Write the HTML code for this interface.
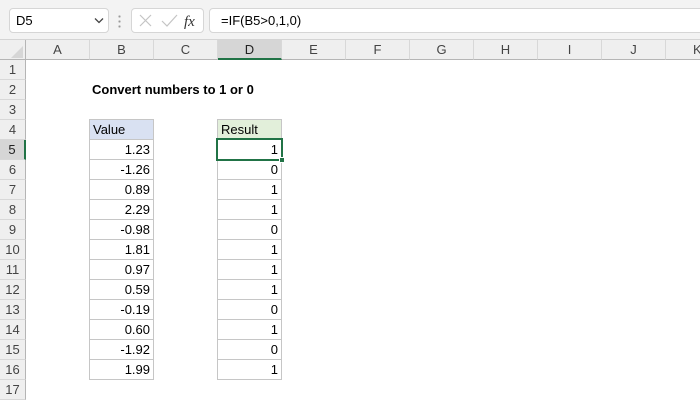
<!DOCTYPE html>
<html><head><style>
*{margin:0;padding:0;box-sizing:border-box}
body{width:700px;height:400px;overflow:hidden;background:#fff;font-family:"Liberation Sans",Arial,sans-serif;position:relative;color:#000}
.a{position:absolute}
.top{left:0;top:0;width:700px;height:40px;background:#f3f3f3;border-bottom:1px solid #d4d4d4}
.box{background:#fff;border:1px solid #d6d6d6;border-radius:4px}
.ch{top:40px;height:20px;background:#efefef;border-bottom:1px solid #b5b5b5;border-right:1px solid #d8d8d8;font-size:13px;color:#444;text-align:center;line-height:19px}
.rh{left:0;width:26px;height:20px;background:#efefef;border-right:1px solid #b5b5b5;border-bottom:1px solid #d8d8d8;font-size:13px;color:#444;text-align:center;line-height:20px}
.c{height:21px;width:65px;border:1px solid #c6c6c6;font-size:13px;line-height:19px;text-align:right;padding-right:3px}
</style></head><body>
<div class="a top"></div>
<div class="a box" style="left:9px;top:8px;width:100px;height:25px;font-size:13px;line-height:23px;padding-left:6px">D5</div>
<svg class="a" style="left:94px;top:17px" width="10" height="7"><path d="M1 1.5L5 5.5L9 1.5" stroke="#444" stroke-width="1.3" fill="none"/></svg>
<div class="a" style="left:118px;top:14px;width:3px;height:14px;background:radial-gradient(circle,#999 1px,transparent 1.2px) 0 0/3px 5px"></div>
<div class="a box" style="left:131px;top:8px;width:73px;height:25px"></div>
<svg class="a" style="left:136px;top:12px" width="70" height="18"><path d="M4 3L15 14M15 3L4 14" stroke="#c4c4c4" stroke-width="1.2"/><path d="M26 9L31 14L41 3" stroke="#c4c4c4" stroke-width="1.2" fill="none"/><text x="48" y="14" font-family="Liberation Serif" font-style="italic" font-size="15" fill="#333">fx</text></svg>
<div class="a box" style="left:209px;top:8px;width:500px;height:25px;font-size:13px;line-height:23px;padding-left:11px">=IF(B5&gt;0,1,0)</div>

<div class="a" style="left:0;top:40px;width:26px;height:20px;background:#efefef;border-right:1px solid #b5b5b5;border-bottom:1px solid #b5b5b5"></div>
<svg class="a" style="left:10px;top:45px" width="14" height="14"><path d="M13 1L13 13L1 13Z" fill="#d6d6d6"/></svg>
<div class="a ch" style="left:26px;width:64px">A</div>
<div class="a ch" style="left:90px;width:64px">B</div>
<div class="a ch" style="left:154px;width:64px">C</div>
<div class="a ch" style="left:218px;width:64px;background:#d6d6d6;border-bottom:2px solid #217346;color:#222">D</div>
<div class="a ch" style="left:282px;width:64px">E</div>
<div class="a ch" style="left:346px;width:64px">F</div>
<div class="a ch" style="left:410px;width:64px">G</div>
<div class="a ch" style="left:474px;width:64px">H</div>
<div class="a ch" style="left:538px;width:64px">I</div>
<div class="a ch" style="left:602px;width:64px">J</div>
<div class="a ch" style="left:666px;width:64px;text-align:left;padding-left:27px">K</div>

<div class="a rh" style="top:60px">1</div>
<div class="a rh" style="top:80px">2</div>
<div class="a rh" style="top:100px">3</div>
<div class="a rh" style="top:120px">4</div>
<div class="a rh" style="top:140px;background:#d6d6d6;border-right:2px solid #217346;color:#222">5</div>
<div class="a rh" style="top:160px">6</div>
<div class="a rh" style="top:180px">7</div>
<div class="a rh" style="top:200px">8</div>
<div class="a rh" style="top:220px">9</div>
<div class="a rh" style="top:240px">10</div>
<div class="a rh" style="top:260px">11</div>
<div class="a rh" style="top:280px">12</div>
<div class="a rh" style="top:300px">13</div>
<div class="a rh" style="top:320px">14</div>
<div class="a rh" style="top:340px">15</div>
<div class="a rh" style="top:360px">16</div>
<div class="a rh" style="top:380px">17</div>

<div class="a" style="left:92px;top:82px;font-size:13px;font-weight:bold">Convert numbers to 1 or 0</div>

<div class="a c" style="left:89px;top:119px;background:#d9e1f2;text-align:left;padding-left:3px">Value</div>
<div class="a c" style="left:217px;top:119px;background:#e2efda;text-align:left;padding-left:3px">Result</div>

<div class="a c" style="left:89px;top:139px">1.23</div>
<div class="a c" style="left:89px;top:159px">-1.26</div>
<div class="a c" style="left:89px;top:179px">0.89</div>
<div class="a c" style="left:89px;top:199px">2.29</div>
<div class="a c" style="left:89px;top:219px">-0.98</div>
<div class="a c" style="left:89px;top:239px">1.81</div>
<div class="a c" style="left:89px;top:259px">0.97</div>
<div class="a c" style="left:89px;top:279px">0.59</div>
<div class="a c" style="left:89px;top:299px">-0.19</div>
<div class="a c" style="left:89px;top:319px">0.60</div>
<div class="a c" style="left:89px;top:339px">-1.92</div>
<div class="a c" style="left:89px;top:359px">1.99</div>

<div class="a c" style="left:217px;top:139px">1</div>
<div class="a c" style="left:217px;top:159px">0</div>
<div class="a c" style="left:217px;top:179px">1</div>
<div class="a c" style="left:217px;top:199px">1</div>
<div class="a c" style="left:217px;top:219px">0</div>
<div class="a c" style="left:217px;top:239px">1</div>
<div class="a c" style="left:217px;top:259px">1</div>
<div class="a c" style="left:217px;top:279px">1</div>
<div class="a c" style="left:217px;top:299px">0</div>
<div class="a c" style="left:217px;top:319px">1</div>
<div class="a c" style="left:217px;top:339px">0</div>
<div class="a c" style="left:217px;top:359px">1</div>

<div class="a" style="left:216px;top:138px;width:67px;height:23px;border:2px solid #217346"></div>
<div class="a" style="left:279px;top:157px;width:6px;height:6px;background:#217346;border:1px solid #fff"></div>
</body></html>
